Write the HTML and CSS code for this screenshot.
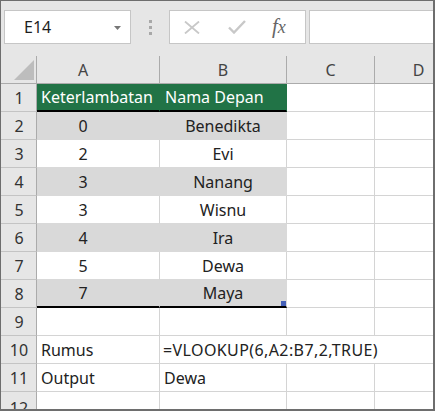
FILE: index.html
```html
<!DOCTYPE html>
<html>
<head>
<meta charset="utf-8">
<link rel="stylesheet" href="styles.css">
</head>
<body>
<div class="window">
  <div class="toolbar">
    <div class="namebox">
      <span class="ref">E14</span>
      <svg class="caret" width="7" height="4" viewBox="0 0 7 4"><polygon points="0,0 7,0 3.5,4" fill="#777"/></svg>
    </div>
    <div class="dots"><span></span><span></span><span></span></div>
    <div class="buttons">
      <svg class="btn-x" width="16" height="13" viewBox="0 0 16 13"><path d="M1 0.5 L15 12.5 M15 0.5 L1 12.5" stroke="#c8c8c8" stroke-width="1.8" fill="none"/></svg>
      <svg class="btn-check" width="18" height="14" viewBox="0 0 18 14"><path d="M1 7.5 L6 12.5 L17 1" stroke="#c8c8c8" stroke-width="2.4" fill="none"/></svg>
      <span class="fx">f<span class="fx-x">x</span></span>
    </div>
    <div class="formula"></div>
  </div>
  <div class="sheet">
    <div class="corner"><svg width="20" height="20" viewBox="0 0 20 20"><polygon points="20,0 20,20 0,20" fill="#bdbdbd"/></svg></div>
    <div class="colhead colhead-a">A</div>
    <div class="colhead">B</div>
    <div class="colhead">C</div>
    <div class="colhead colhead-d">D</div>

    <div class="rowhead">1</div>
    <div class="cell head left">Keterlambatan</div>
    <div class="cell head left head-b">Nama Depan</div>
    <div class="cell"></div><div class="cell"></div>

    <div class="rowhead">2</div>
    <div class="cell gray num">0</div>
    <div class="cell gray name">Benedikta</div>
    <div class="cell"></div><div class="cell"></div>

    <div class="rowhead">3</div>
    <div class="cell white num">2</div>
    <div class="cell white name">Evi</div>
    <div class="cell"></div><div class="cell"></div>

    <div class="rowhead">4</div>
    <div class="cell gray num">3</div>
    <div class="cell gray name">Nanang</div>
    <div class="cell"></div><div class="cell"></div>

    <div class="rowhead">5</div>
    <div class="cell white num">3</div>
    <div class="cell white name">Wisnu</div>
    <div class="cell"></div><div class="cell"></div>

    <div class="rowhead">6</div>
    <div class="cell gray num">4</div>
    <div class="cell gray name">Ira</div>
    <div class="cell"></div><div class="cell"></div>

    <div class="rowhead">7</div>
    <div class="cell white num">5</div>
    <div class="cell white name">Dewa</div>
    <div class="cell"></div><div class="cell"></div>

    <div class="rowhead">8</div>
    <div class="cell gray last num">7</div>
    <div class="cell gray last name handle-cell">Maya<span class="handle"></span></div>
    <div class="cell"></div><div class="cell"></div>

    <div class="rowhead">9</div>
    <div class="cell"></div><div class="cell"></div><div class="cell"></div><div class="cell"></div>

    <div class="rowhead">10</div>
    <div class="cell left">Rumus</div>
    <div class="cell left span3 formula-text">=VLOOKUP(6,A2:B7,2,TRUE)</div>

    <div class="rowhead">11</div>
    <div class="cell left">Output</div>
    <div class="cell left">Dewa</div>
    <div class="cell"></div><div class="cell"></div>

    <div class="rowhead row12">12</div>
    <div class="cell"></div><div class="cell"></div><div class="cell"></div><div class="cell"></div>
  </div>
</div>
</body>
</html>
```
FILE: styles.css
```css
html, body {
  margin: 0;
  padding: 0;
  background: #ffffff;
}
.window {
  width: 435px;
  height: 411px;
  box-sizing: border-box;
  border-left: 1px solid #6e6e6e;
  border-top: 1px solid #6e6e6e;
  border-right: 2px solid #6e6e6e;
  border-bottom: 2px solid #6e6e6e;
  overflow: hidden;
  display: flex;
  flex-direction: column;
  font-family: "Noto Sans", "Open Sans", sans-serif;
  font-size: 16px;
  color: #222;
}
.toolbar {
  height: 55px;
  flex: none;
  background: #e6e6e6;
  display: flex;
  align-items: flex-start;
  padding-top: 9px;
  padding-left: 3px;
  box-sizing: border-box;
}
.namebox {
  width: 127px;
  height: 34px;
  box-sizing: border-box;
  background: #fff;
  border: 1px solid #c6c6c6;
  display: flex;
  align-items: center;
  padding-left: 19px;
  padding-right: 9px;
  font-size: 16px;
  color: #1e1e1e;
}
.ref { flex: 1; }
.caret { margin-top: 1px; }
.dots {
  margin-left: 18px;
  width: 3px;
  height: 34px;
  display: flex;
  flex-direction: column;
  justify-content: center;
  gap: 3px;
}
.dots span {
  width: 3px;
  height: 3px;
  background: #a8a8a8;
}
.buttons {
  margin-left: 17px;
  width: 137px;
  height: 34px;
  box-sizing: border-box;
  background: #fff;
  border: 1px solid #c6c6c6;
  display: flex;
  align-items: center;
  padding-left: 14px;
}
.btn-x { margin-left: 0; }
.btn-check { margin-left: 28px; margin-top: -1px; }
.fx {
  margin-left: 26px;
  font-family: "Liberation Serif", serif;
  font-style: italic;
  font-size: 21px;
  color: #666;
  line-height: 1;
  margin-top: -2px;
}
.fx-x { font-size: 18px; }
.formula {
  margin-left: 3px;
  flex: 1;
  height: 34px;
  box-sizing: border-box;
  background: #fff;
  border: 1px solid #c6c6c6;
  border-right: none;
}
.sheet {
  flex: 1;
  display: grid;
  grid-template-columns: 36px 123px 127px 88px 88px;
  grid-auto-rows: 28px;
  overflow: hidden;
}
.sheet > div {
  box-sizing: border-box;
  border-right: 1px solid #d4d4d4;
  border-bottom: 1px solid #d4d4d4;
  white-space: nowrap;
  display: flex;
  align-items: center;
}
.corner {
  background: #e6e6e6;
  border-right-color: #ababab !important;
  border-bottom-color: #ababab !important;
  justify-content: flex-end;
  align-items: flex-end !important;
  padding-right: 2px;
  padding-bottom: 3px;
}
.colhead {
  background: #e6e6e6;
  border-right-color: #ababab !important;
  border-bottom-color: #ababab !important;
  justify-content: center;
  color: #444;
}
.colhead-a { padding-right: 30px; }
.rowhead {
  background: #e6e6e6;
  border-right-color: #ababab !important;
  border-bottom-color: #c4c4c4 !important;
  justify-content: center;
  color: #333;
  padding-left: 1px;
}
.row12 { align-items: flex-start !important; padding-top: 5px; }
.cell { background: #fff; }
.left { padding-left: 4px; }
.head {
  background: #217346 !important;
  color: #fff;
  border-right-color: #217346 !important;
  border-bottom: 2px solid #000 !important;
}
.head-b { padding-left: 5px; }
.gray {
  background: #d9d9d9 !important;
  border-right-color: #d9d9d9 !important;
  border-bottom-color: #d9d9d9 !important;
}
.white { border-bottom-color: #d9d9d9 !important; }
.last { border-bottom: 2px solid #000 !important; }
.num {
  justify-content: center;
  padding-right: 30px;
}
.name { justify-content: center; }
.span3 {
  grid-column: span 3;
  padding-left: 3px;
}
.formula-text { letter-spacing: 0.4px; }
.handle-cell { position: relative; }
.handle {
  position: absolute;
  right: 0;
  bottom: 0;
  width: 5px;
  height: 5px;
  background: #4560b8;
}
```
